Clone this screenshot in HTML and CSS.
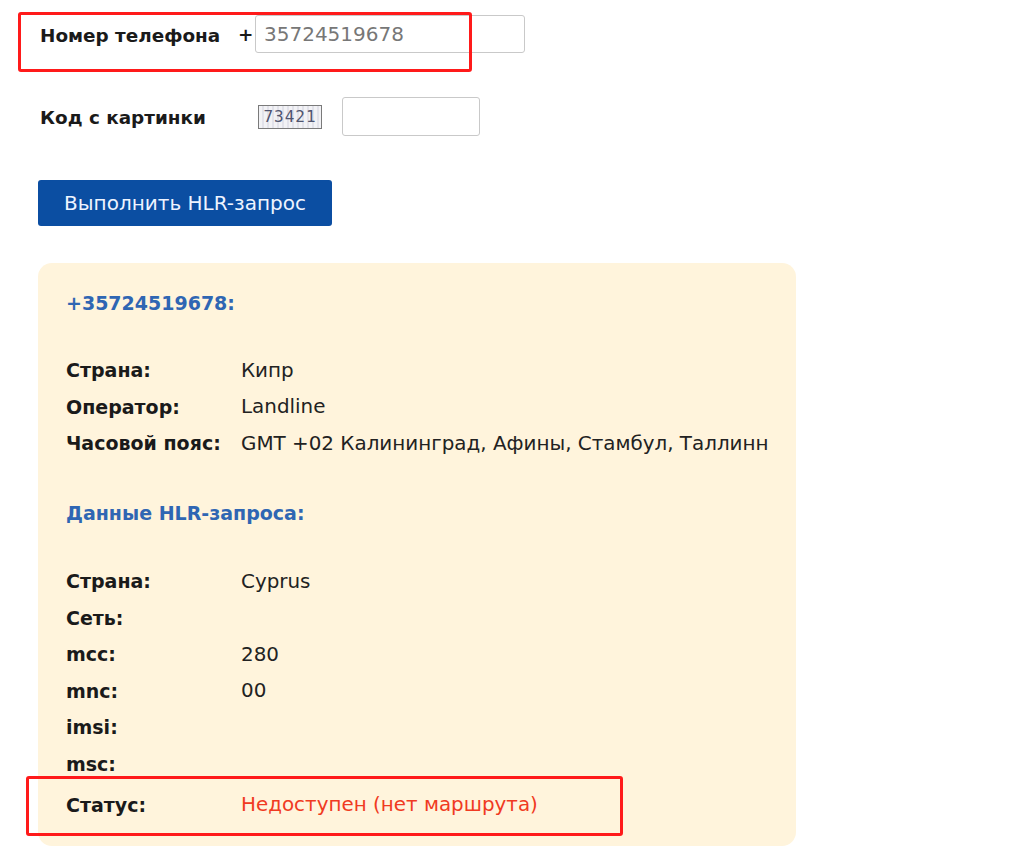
FILE: index.html
```html
<!doctype html>
<html lang="ru">
<head>
    <meta charset="utf-8">
    <title>HLR-запрос</title>
    <link rel="stylesheet" href="styles.css">
</head>
<body>
    <form class="hlr-form">
        <div class="form-row phone-row">
            <label class="form-label" for="phone">Номер телефона</label>
            <span class="plus">+</span>
            <input class="text-input phone-input" id="phone" type="text" value="35724519678">
            <div class="mark mark-phone"></div>
        </div>
        <div class="form-row captcha-row">
            <label class="form-label" for="code">Код с картинки</label>
            <div class="captcha"><span>73421</span></div>
            <input class="text-input code-input" id="code" type="text">
        </div>
        <button class="submit" type="button">Выполнить HLR-запрос</button>
    </form>

    <div class="result">
        <h3 class="result-title">+35724519678:</h3>
        <table class="info">
            <tr><th>Страна:</th><td>Кипр</td></tr>
            <tr><th>Оператор:</th><td>Landline</td></tr>
            <tr><th>Часовой пояс:</th><td>GMT +02 Калининград, Афины, Стамбул, Таллинн</td></tr>
        </table>

        <h3 class="result-title hlr-title">Данные HLR-запроса:</h3>
        <table class="info">
            <tr><th>Страна:</th><td>Cyprus</td></tr>
            <tr><th>Сеть:</th><td></td></tr>
            <tr><th>mcc:</th><td>280</td></tr>
            <tr><th>mnc:</th><td>00</td></tr>
            <tr><th>imsi:</th><td></td></tr>
            <tr><th>msc:</th><td></td></tr>
            <tr class="status-row"><th>Статус:</th><td class="status">Недоступен (нет маршрута)<div class="mark mark-status"></div></td></tr>
        </table>
    </div>
</body>
</html>
```

FILE: styles.css
```css
body {
    margin: 0;
    padding: 15px 0 0 38px;
    font-family: "DejaVu Sans", "Noto Sans", sans-serif;
    color: #1a1a1a;
    background: #fff;
}
.hlr-form {
    display: flex;
    flex-direction: column;
    align-items: flex-start;
}
.form-row {
    display: flex;
    align-items: center;
    position: relative;
}
.form-label {
    font-weight: bold;
    font-size: 18.4px;
    padding-left: 2px;
}
.phone-row .form-label {
    width: 198px;
    padding-top: 2px;
}
.plus {
    font-weight: bold;
    font-size: 18.4px;
    width: 17px;
}
.text-input {
    box-sizing: border-box;
    border: 1px solid #c9c9c9;
    border-radius: 3px;
    background: #fff;
    font-family: inherit;
    font-size: 20px;
    color: #777;
    padding: 0 8px;
}
.phone-input {
    width: 270px;
    height: 38px;
}
.captcha-row {
    margin-top: 44px;
}
.captcha-row .form-label {
    width: 218px;
    padding-top: 2px;
}
.captcha {
    box-sizing: border-box;
    width: 64px;
    height: 24px;
    border: 1px solid #7a7a7a;
    background: repeating-linear-gradient(90deg, #f2f2f5 0 3px, #e2e2ea 3px 5px);
    display: flex;
    align-items: center;
    justify-content: center;
    font-family: "DejaVu Sans Mono", monospace;
    font-size: 16px;
    letter-spacing: 1px;
    color: #505570;
}
.code-input {
    width: 138px;
    height: 39px;
    margin-left: 20px;
}
.submit {
    margin-top: 44px;
    width: 294px;
    height: 46px;
    border: none;
    border-radius: 3px;
    background: #0b4ea2;
    color: #eef4ff;
    font-family: inherit;
    font-size: 20px;
}
.mark {
    position: absolute;
    border: 3px solid #ff1a1a;
    border-radius: 3px;
    pointer-events: none;
}
.mark-phone {
    left: -20px;
    top: -3px;
    width: 448px;
    height: 54px;
}
.result {
    margin-top: 37px;
    width: 758px;
    box-sizing: border-box;
    background: #fff4dc;
    border-radius: 14px;
    padding: 29px 28px 23px;
}
.result-title {
    margin: 0 0 38px;
    font-size: 19px;
    font-weight: bold;
    color: #2f66b3;
}
.hlr-title {
    margin-top: 40px;
    margin-bottom: 39px;
}
.info {
    border-collapse: collapse;
    table-layout: fixed;
    width: 100%;
    font-size: 19px;
}
.info th {
    text-align: left;
    font-weight: bold;
    width: 175px;
    padding: 0;
    height: 36.6px;
}
.info td {
    padding: 0;
    font-size: 19.9px;
    color: #222;
    white-space: nowrap;
}
.info .status-row th,
.info .status-row td {
    padding-top: 4px;
}
.info .status {
    position: relative;
    color: #f03a22;
}
.mark-status {
    left: -215px;
    top: -6px;
    width: 591px;
    height: 54px;
}
```
